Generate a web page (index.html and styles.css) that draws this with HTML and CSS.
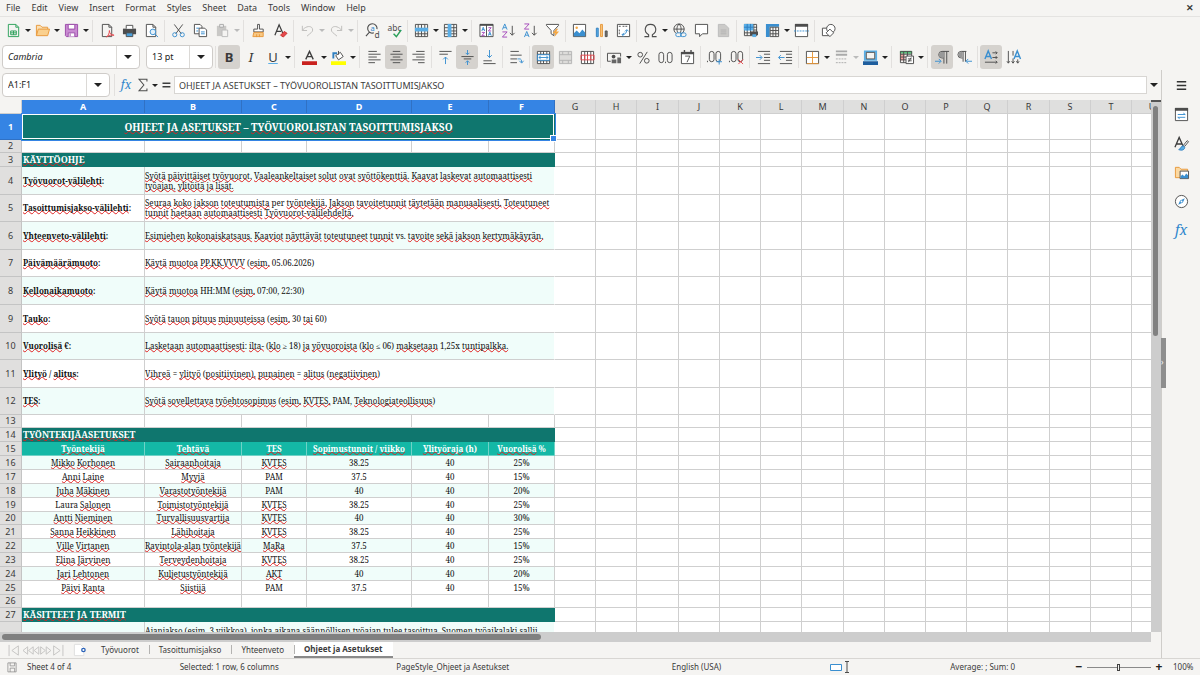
FILE: index.html
```html
<!DOCTYPE html>
<html lang="en">
<head>
<meta charset="utf-8">
<title>Ohjeet ja Asetukset</title>
<link rel="stylesheet" href="styles.css">
</head>
<body>
<nav class="menubar">
  <button>File</button><button>Edit</button><button>View</button><button>Insert</button><button>Format</button><button>Styles</button><button>Sheet</button><button>Data</button><button>Tools</button><button>Window</button><button>Help</button>
  <button class="close" aria-label="Close document">✕</button>
</nav>

<div class="toolbar" role="toolbar" aria-label="Standard">
  <button class="tb" aria-label="New"><svg viewBox="0 0 16 16"><path class="green" d="M2.500 1.500h8l3 3v10h-11z"/><path class="green" d="M10.500 1.500v3h3"/><path class="green" fill="#9fdcb4" d="M5 8.500h6v4H5zM5 10.500h6M8 8.500v4"/></svg></button><button class="dd" aria-label="New options"></button>
  <button class="tb" aria-label="Open"><svg viewBox="0 0 16 16"><path d="M1.500 13.500v-11h4l2 2h6v2" fill="#fbe0b4" stroke="#e8973a"/><path d="M1.500 13.500l2-7h12l-2 7z" fill="#fad08e" stroke="#e8973a"/></svg></button><button class="dd" aria-label="Open options"></button>
  <button class="tb" aria-label="Save"><svg viewBox="0 0 16 16"><path d="M1.500 1.500h13v13h-12l-1-1z" fill="#c98ad2" stroke="#9a4aa8"/><path d="M4.500 1.500h7v5h-7zM4.500 14.500v-4h7v4" fill="#fff" stroke="#9a4aa8"/><path d="M6.500 11v3" stroke="#9a4aa8"/></svg></button><button class="dd" aria-label="Save options"></button>
  <i class="sep"></i>
  <button class="tb" aria-label="Export as PDF"><svg viewBox="0 0 16 16"><path class="g" d="M2.500 1.500h7l3 3v10h-10zM9.500 1.500v3h3"/><path d="M7 15c2-2 3-4 3-7 0 3 2 5 5 5-3-.5-6 0-8 2z" class="red"/></svg></button>
  <button class="tb" aria-label="Print"><svg viewBox="0 0 16 16"><path d="M1 6h14v6H1z" fill="#4d4d4d"/><path d="M4.500 6V2.500h7V6" class="gw"/><path d="M4.500 10.500h7v4h-7z" fill="#4aa0dc" stroke="#4d4d4d"/></svg></button>
  <button class="tb" aria-label="Print preview"><svg viewBox="0 0 16 16"><path class="gw" d="M2.500 1.500h7l3 3v10h-10zM9.500 1.500v3h3"/><circle cx="9.500" cy="9.500" r="3" fill="#e4f1fa" stroke="#3a8fd0"/><path class="b" d="M12 12l3 3"/></svg></button>
  <i class="sep"></i>
  <button class="tb" aria-label="Cut"><svg viewBox="0 0 16 16"><path class="g" d="M3.500 1.500l7.500 10M12.500 1.500L5 11.500"/><circle class="b" cx="4" cy="12.500" r="2.200"/><circle class="b" cx="12" cy="12.500" r="2.200"/></svg></button>
  <button class="tb" aria-label="Copy"><svg viewBox="0 0 16 16"><path class="gw" d="M1.500 1.500h6l2 2v8h-8z"/><path class="gw" d="M6.500 5.500h6l2 2v7h-8z"/><path class="b" d="M3.500 5.500h3M3.500 8.500h2M8.500 9.500h4M8.500 11.500h4"/></svg></button>
  <button class="tb off" aria-label="Paste"><svg viewBox="0 0 16 16"><path d="M2 3h10v11H2z" fill="#c9c8c6"/><path d="M5 1.500h4v3H5z" fill="#eee" stroke="#aaa"/><path d="M7.500 7.500h6v7h-6z" fill="#f5f4f2" stroke="#bbb"/></svg></button><button class="dd off" aria-label="Paste options"></button>
  <i class="sep"></i>
  <button class="tb" aria-label="Clone formatting"><svg viewBox="0 0 16 16"><path class="gw" d="M7 1.500h2v5h4v3H3v-3h4z"/><path d="M3 10h10v4.500H2z" fill="#f8c884" stroke="#e8973a"/><path d="M6 12v3M9 12v3" stroke="#e8973a"/></svg></button>
  <button class="tb" aria-label="Clear formatting"><svg viewBox="0 0 16 16"><path d="M2 13L6.500 2l4 9M3.500 9h5" fill="none" stroke="#3d3d3d" stroke-width="1.300"/><path d="M8 13l4-4 3 2-4 4z" fill="#e5484d" stroke="#c9302c"/></svg></button>
  <i class="sep"></i>
  <button class="tb off" aria-label="Undo"><svg viewBox="0 0 16 16"><path class="lg" d="M2.500 3v5h5M2.500 8c3-5 11-6 11-.5 0 2-2 3-6 6.500"/></svg></button><button class="dd off" aria-label="Undo steps"></button>
  <button class="tb off" aria-label="Redo"><svg viewBox="0 0 16 16"><path class="lg" d="M13.500 3v5h-5M13.500 8c-3-5-11-6-11-.5 0 2 2 3 6 6.500"/></svg></button><button class="dd off" aria-label="Redo steps"></button>
  <i class="sep"></i>
  <button class="tb" aria-label="Find and replace"><svg viewBox="0 0 16 16"><path class="g" d="M9.500 10.500a5 5 0 1 1 3.300-4M4.500 10L1 14" stroke-width="1.200"/><text x="8" y="8.500" class="ib" font-size="8">a</text><text x="13" y="15.500" class="ig" font-size="9">d</text></svg></button>
  <button class="tb" aria-label="Spelling"><svg viewBox="0 0 16 16"><text x="8" y="8" class="ig" font-size="9">abc</text><path d="M7 11.500l3 3 5-7" fill="none" stroke="#2ca05a" stroke-width="1.500"/></svg></button>
  <i class="sep"></i>
  <button class="tb" aria-label="Row"><svg viewBox="0 0 16 16"><path class="g" d="M1.500 1.500h13v13h-13zM1.500 11.500h13M4.500 1.500v13M8 1.500v13M11.500 1.500v13"/><path d="M1 5h14v4H1z" fill="#5aaee6"/></svg></button><button class="dd" aria-label="Row options"></button>
  <button class="tb" aria-label="Column"><svg viewBox="0 0 16 16"><path class="g" d="M1.500 1.500h13v13h-13zM1.500 5h13M1.500 8.500h13M1.500 11.500h13M11.500 1.500v13"/><path d="M5 1h4v14H5z" fill="#5aaee6"/></svg></button><button class="dd" aria-label="Column options"></button>
  <i class="sep"></i>
  <button class="tb" aria-label="Sort"><svg viewBox="0 0 16 16"><path class="gw" d="M1 1.500h14v13H1zM8 1.500v13"/><path d="M1 1h14v2H1z" fill="#4d4d4d"/><path class="b" d="M3 8.500l1.500-4 1.500 4M3.500 7h2M10 13.500l1.500-4 1.500 4M10.500 12h2"/><path d="M3 10h3l-3 3.500h3M10 5h3l-3 3.500h3" fill="none" stroke="#a347ba"/></svg></button>
  <button class="tb" aria-label="Sort ascending"><svg viewBox="0 0 16 16"><path class="b" d="M1.500 7L4 1l2.500 6M2.500 5h3"/><path d="M1.500 9.500h5l-5 5.500h5" fill="none" stroke="#a347ba"/><path class="g" d="M12 3v10M9.500 10.500l2.500 2.500 2.500-2.500"/></svg></button>
  <button class="tb" aria-label="Sort descending"><svg viewBox="0 0 16 16"><path class="b" d="M1.500 15L4 9l2.500 6M2.500 13h3"/><path d="M1.500 1h5l-5 5.500h5" fill="none" stroke="#a347ba"/><path class="g" d="M12 3v10M9.500 10.500l2.500 2.500 2.500-2.500"/></svg></button>
  <button class="tb" aria-label="AutoFilter"><svg viewBox="0 0 16 16"><path class="gw" d="M1.500 1.500h13v1L9.500 8v5.500l-3-2V8l-5-5.500z"/><path d="M12 6l-4 5h3l-1 4 5-6h-3l2-3z" fill="#f5a742"/></svg></button>
  <i class="sep"></i>
  <button class="tb" aria-label="Insert image"><svg viewBox="0 0 16 16"><path class="gw" d="M1.500 1.500h13v13h-13z"/><path d="M2 14v-3l3-3 3 3 3-4 3 3v4z" fill="#3a8fd0"/><circle cx="5" cy="5" r="1.300" fill="#f5a742"/></svg></button>
  <button class="tb" aria-label="Insert chart"><svg viewBox="0 0 16 16"><path d="M2.500 5.500h2v9h-2z" fill="#5aaee6" stroke="#2f7fc0"/><path d="M7 1.500h2v13H7z" fill="#f8c884" stroke="#e8973a"/><path d="M12 8.500h2v6h-2z" fill="#777" stroke="#4d4d4d"/></svg></button>
  <button class="tb" aria-label="Pivot table"><svg viewBox="0 0 16 16"><path class="gw" d="M1.500 1.500h13v13h-13z"/><path class="g" d="M3 3.500h2M7 3.500h6M3.500 7v6" stroke-dasharray="2 1"/><path class="b" d="M6.500 12.500c3 0 5-2 5-5M9.500 9l2-2 2 2M8.500 10.500l-2 2 2 2"/></svg></button>
  <i class="sep"></i>
  <button class="tb" aria-label="Special character"><svg viewBox="0 0 16 16"><path class="g" d="M1.500 14.500H6v-2C0 9 2 1.500 8 1.500s8 7.500 2 11v2h4.500" stroke-width="1.200"/></svg></button><button class="dd" aria-label="Special character options"></button>
  <button class="tb" aria-label="Hyperlink"><svg viewBox="0 0 16 16"><circle class="g" cx="7.500" cy="6.500" r="5.500"/><path class="g" d="M2 6.500h11M7.500 1c-3 3-3 8 0 11M7.500 1c3 3 3 8 0 11"/><rect x="4" y="10.500" width="6" height="4" rx="2" fill="#f5f4f2" stroke="#3a8fd0"/><rect x="9" y="10.500" width="6" height="4" rx="2" fill="none" stroke="#3a8fd0"/></svg></button>
  <button class="tb" aria-label="Comment"><svg viewBox="0 0 16 16"><path class="gw" d="M1.500 1.500h13v10H9l-3 3v-3H1.500z"/></svg></button>
  <button class="tb" aria-label="Headers and footers"><svg viewBox="0 0 16 16"><path d="M2.500 1.500h7l4 4v9h-11z" fill="#cbcac8" stroke="#bbb"/><path d="M5 7.500h6M5 9.500h6M5 11.500h6" stroke="#b2b2b2"/></svg></button>
  <i class="sep"></i>
  <button class="tb" aria-label="Define print area"><svg viewBox="0 0 16 16"><path class="g" d="M1.500 1.500h13v12h-13zM1.500 10.500h13M4.500 1.500v12M8 1.500v12M11.500 1.500v12M11 4.500h4M11 7.500h4"/><path d="M1 1h10v7H1z" fill="#5aaee6"/><path d="M4.500 1v7M8 1v7M1 4.500h10" stroke="#2f7fc0"/><path d="M8 9h8v4H8z" fill="#4d4d4d"/><path d="M10 12h4v3h-4z" fill="#5aaee6"/></svg></button>
  <button class="tb" aria-label="Freeze rows and columns"><svg viewBox="0 0 16 16"><path d="M1 1h14v3H1zM1 1h4v14H1z" fill="#3a8fd0"/><path class="g" d="M5.500 4.500h9v10h-9zM5.500 8h9M5.500 11.500h9M8.500 4.500v10M11.500 4.500v10"/></svg></button><button class="dd" aria-label="Freeze options"></button>
  <button class="tb" aria-label="Split window"><svg viewBox="0 0 16 16"><path class="gw" d="M1.500 1.500h13v13h-13z"/><path d="M1 1h14v3H1z" fill="#4d4d4d"/><path class="b" d="M0 8.500h16" stroke-dasharray="2 1"/></svg></button>
  <i class="sep"></i>
  <button class="tb" aria-label="Show draw functions"><svg viewBox="0 0 16 16"><path class="gw" d="M1.500 5.500h8v8h-8z"/><circle class="gw" cx="10.500" cy="6" r="4.500"/><path class="gw" d="M9.500 6.500l4 4-4 4-4-4z"/></svg></button>
</div>

<div class="toolbar format" role="toolbar" aria-label="Formatting">
  <span class="combo font"><input aria-label="Font name" value="Cambria"><button aria-label="Font list"></button></span>
  <span class="combo size"><input aria-label="Font size" value="13 pt"><button aria-label="Size list"></button></span>
  <i class="sep"></i>
  <button class="tb on letter"><b>B</b></button>
  <button class="tb letter"><em>I</em></button>
  <button class="tb letter"><u>U</u></button><button class="dd" aria-label="Underline styles"></button>
  <i class="sep"></i>
  <button class="tb" aria-label="Font color"><svg viewBox="0 0 16 16"><path d="M4 10L8 1.500l4 8.500M5.500 7h5" fill="none" stroke="#3d3d3d" stroke-width="1.400"/><path d="M0 12h16v4H0z" fill="#c9211e"/></svg></button><button class="dd" aria-label="Font color palette"></button>
  <button class="tb" aria-label="Highlighting"><svg viewBox="0 0 16 16"><path d="M2.500 9V3.500h4" fill="none" stroke="#2f7fc0" stroke-width="2"/><path class="gw" d="M5 6l5-3.500 3 4.500-5 3.500zM8 1v4"/><path d="M0 12h16v4H0z" fill="#ff0"/></svg></button><button class="dd" aria-label="Highlighting palette"></button>
  <i class="sep"></i>
  <button class="tb" aria-label="Align left"><svg viewBox="0 0 16 16"><path class="g" d="M1.500 1.500h9M1.500 4.500h13M1.500 7.500h9M1.500 10.500h13M1.500 13.500h7"/></svg></button>
  <button class="tb on" aria-label="Align center"><svg viewBox="0 0 16 16"><path class="g" d="M4 1.500h8M1.500 4.500h13M4 7.500h8M1.500 10.500h13M4 13.500h8"/></svg></button>
  <button class="tb" aria-label="Align right"><svg viewBox="0 0 16 16"><path class="g" d="M5.500 1.500h9M1.500 4.500h13M5.500 7.500h9M1.500 10.500h13M7.500 13.500h7"/></svg></button>
  <i class="sep"></i>
  <button class="tb" aria-label="Align top"><svg viewBox="0 0 16 16"><path class="g" d="M1.500 1.500h13M1.500 4.500h9"/><path class="b" d="M8 15V7.500M5.500 10L8 7.500l2.500 2.500"/></svg></button>
  <button class="tb on" aria-label="Center vertically"><svg viewBox="0 0 16 16"><path class="g" d="M1.500 7h13M4 9.500h8"/><path class="b" d="M8 0v5M6 3l2 2 2-2M8 16v-4.500M6 13.500l2-2 2 2"/></svg></button>
  <button class="tb" aria-label="Align bottom"><svg viewBox="0 0 16 16"><path class="g" d="M1.500 11.500h9M1.500 14.500h13"/><path class="b" d="M8 0v8M5.500 5.500L8 8l2.500-2.500"/></svg></button>
  <i class="sep"></i>
  <button class="tb" aria-label="Wrap text"><svg viewBox="0 0 16 16"><path class="g" d="M1.500 1.500h9M1.500 5.500h12M1.500 9.500h7M1.500 13.500h7"/><path class="b" d="M9 9.500h3q1.500 0 1.500 4M11 11.500l2.500 2.500 2-2.500"/></svg></button>
  <i class="sep"></i>
  <button class="tb on" aria-label="Merge and center"><svg viewBox="0 0 16 16"><path class="gw" d="M1.500 1.500h13v13h-13zM1.500 4.500h13M1.500 11.500h13M5 1.500v3M8 1.500v3M11.500 1.500v3M5 11.500v3M8 11.500v3M11.500 11.500v3"/><path class="b" d="M1.500 5v6h13V5zM3 8h10M5 6.500L3 8l2 1.500M11 6.500L13 8l-2 1.500"/></svg></button>
  <button class="tb off" aria-label="Merge cells"><svg viewBox="0 0 16 16"><path d="M1.500 1.500h13v13h-13zM1.500 5h13M1.500 11h13M5 1.500V5M11 1.500V5M5 11v3.500M11 11v3.500" fill="#dddcda" stroke="#b4b4b4"/></svg></button>
  <button class="tb" aria-label="Unmerge cells"><svg viewBox="0 0 16 16"><path class="gw" d="M1.500 1.500h13v13h-13zM5 1.500v13M8 1.500v13M11.500 1.500v13"/><path class="red" d="M1 5.500h14v5H1zM5 5.500v5M8 5.500v5M11.500 5.500v5"/></svg></button>
  <i class="sep"></i>
  <button class="tb" aria-label="Currency"><svg viewBox="0 0 16 16"><path class="g" d="M4 12H.5V3.500h14V7"/><circle cx="7" cy="7" r="2" fill="#4d4d4d"/><path d="M5 10h5v4H5zM11 8h4v6h-4z" fill="#666"/></svg></button><button class="dd" aria-label="Currency options"></button>
  <button class="tb" aria-label="Percent"><svg viewBox="0 0 16 16"><circle class="g" cx="4.500" cy="5" r="2.500"/><circle class="g" cx="11.500" cy="11.500" r="2.500"/><path class="g" d="M12 2L4 14.500"/></svg></button>
  <button class="tb" aria-label="Number"><svg viewBox="0 0 16 16"><rect class="g" x="1" y="2.500" width="5" height="11" rx="2.500"/><rect class="g" x="10" y="2.500" width="5" height="11" rx="2.500"/><path class="g" d="M8 12.500v1.500"/></svg></button>
  <button class="tb" aria-label="Date"><svg viewBox="0 0 16 16"><path class="gw" d="M1.500 2.500h13v12h-13z"/><path d="M1 2h14v2.500H1zM4 0h1.500v3H4zM11 0h1.500v3H11z" fill="#4d4d4d"/><path class="g" d="M5.500 6.500h5l-3 6.500"/></svg></button>
  <i class="sep"></i>
  <button class="tb" aria-label="Add decimal place"><svg viewBox="0 0 16 16"><rect class="g" x="2.500" y="1.500" width="5" height="11" rx="2.500"/><rect class="g" x="9.500" y="1.500" width="5" height="11" rx="2.500"/><path class="g" d="M.5 11.500V13"/><path class="b" d="M10 12.500h6M13 9.500v6"/></svg></button>
  <button class="tb" aria-label="Delete decimal place"><svg viewBox="0 0 16 16"><rect class="g" x="2.500" y="1.500" width="5" height="11" rx="2.500"/><rect class="g" x="9.500" y="1.500" width="5" height="11" rx="2.500"/><path class="g" d="M.5 11.500V13"/><path class="red" d="M10 10l5 5M15 10l-5 5"/></svg></button>
  <i class="sep"></i>
  <button class="tb" aria-label="Increase indent"><svg viewBox="0 0 16 16"><path class="g" d="M2 1.500h13M8.500 4.500H15M8.500 8H15M8.500 11H15M2 14.500h13"/><path class="b" d="M0 8h6M4 5.500L6.500 8 4 10.500"/></svg></button>
  <button class="tb" aria-label="Decrease indent"><svg viewBox="0 0 16 16"><path class="g" d="M2 1.500h13M8.500 4.500H15M8.500 8H15M8.500 11H15M2 14.500h13"/><path class="b" d="M1 8h6M3 5.500L.5 8 3 10.500"/></svg></button>
  <i class="sep"></i>
  <button class="tb" aria-label="Borders"><svg viewBox="0 0 16 16"><path class="gw" d="M1.500 1.500h13v13h-13z"/><path d="M2 14.500h12.500M2 8h12M8 2v12" fill="none" stroke="#e8973a"/></svg></button><button class="dd" aria-label="Border choices"></button>
  <button class="tb off" aria-label="Border style"><svg viewBox="0 0 16 16"><path d="M2 1.500h12M2 5h12" stroke="#aaa" stroke-width="2"/><path d="M2 9.500h12M2 13.500h12" stroke="#aaa" stroke-dasharray="2 1"/></svg></button><button class="dd off" aria-label="Border style choices"></button>
  <button class="tb" aria-label="Border color"><svg viewBox="0 0 16 16"><path d="M2 1.500h12v9H2z" fill="#f5f4f2" stroke="#5aaee6" stroke-width="2"/><path class="g" d="M3.500 2.500h9v7h-9z"/><path d="M0 12h16v4H0z" fill="#1e5e9e"/></svg></button><button class="dd" aria-label="Border color palette"></button>
  <i class="sep"></i>
  <button class="tb" aria-label="Conditional formatting"><svg viewBox="0 0 16 16"><path d="M1 1h13v3H1z" fill="#59c27b"/><path d="M1 4h5v7H1z" fill="#f1a09c"/><path class="g" d="M1.500 1.500h12v12h-12zM1.500 4.500h12M1.500 7.500h12M1.500 10.500h12M5 1.500v12M9 1.500v12"/><path class="gw" d="M7.500 6.500h8v8h-8z"/><path class="g" d="M9.500 9.500h4M9.500 11.500h4M13 8l-3 5"/></svg></button><button class="dd" aria-label="Conditional formatting options"></button>
  <i class="sep"></i>
  <button class="tb on" aria-label="Left-to-right"><svg viewBox="0 0 16 16"><path class="g" d="M15 1.500H7.500a3.500 3.500 0 0 0 0 7H9M9.500 1.500v13M12.500 1.500v13"/><path d="M9.500 2H7a3 3 0 0 0 0 6h2.500z" fill="#999"/><path class="b" d="M0 12h6M4 9.500L6.500 12 4 14.500"/></svg></button>
  <button class="tb" aria-label="Right-to-left"><svg viewBox="0 0 16 16"><path class="g" d="M10 1.500H4.500a3.500 3.500 0 0 0 0 7H6M6.500 1.500v11M9 1.500v11"/><path d="M6 2H4.500a3 3 0 0 0 0 6H6z" fill="#999"/><path class="b" d="M10 12h6M12 9.500L9.500 12l2.500 2.500"/></svg></button>
  <i class="sep"></i>
  <button class="tb on" aria-label="Text direction horizontal"><svg viewBox="0 0 16 16"><path d="M1 9.500L4.500 1 8 9.500M2 7h5" fill="none" stroke="#3a8fd0" stroke-width="1.500"/><path class="g" d="M9 3h5M12.500 1.500L14 3l-1.500 1.500M9 8h5M12.500 6.500L14 8l-1.500 1.500M1 13h13M12.500 11.500L14 13l-1.500 1.500"/></svg></button>
  <button class="tb" aria-label="Text direction vertical"><svg viewBox="0 0 16 16"><path class="g" d="M2.500 1v13M1 12l1.500 2L4 12M7.500 1v5M7.500 9v5M6 12l1.500 2L9 12M12.500 10v4M11 12l1.500 2 1.500-2"/><path d="M8.500 9.500L12 1l3.500 8.500M9.500 7h5" fill="none" stroke="#3a8fd0" stroke-width="1.500"/></svg></button>
</div>

<main class="main">
  <section class="doc">
    <div class="formulabar">
      <span class="combo name"><input aria-label="Name box" value="A1:F1"><button aria-label="Named ranges"></button></span>
      <i class="sep"></i>
      <button class="fx" aria-label="Function wizard"><em>fx</em></button>
      <button class="tb" aria-label="Select function"><svg viewBox="0 0 16 16"><path class="g" d="M12.500 4V1.500h-9L9 8l-5.500 6.500h9V12" stroke-width="1.200"/></svg></button><button class="dd" aria-label="Functions"></button>
      <button class="tb" aria-label="Formula"><svg viewBox="0 0 16 16"><path d="M4 6h9M4 10h9" stroke="#3d3d3d" stroke-width="1.500"/></svg></button>
      <input class="formula" aria-label="Input line" value="OHJEET JA ASETUKSET – TYÖVUOROLISTAN TASOITTUMISJAKSO">
      <button class="dd big" aria-label="Expand formula bar"></button>
    </div>
    <div class="grid">
      <div class="sheet"><table><colgroup></colgroup><thead></thead><tbody></tbody></table></div>
      <div class="vbar"><i></i></div>
      <div class="hbar"><i></i></div>
    </div>
    <div class="tabs">
      <svg class="nav" viewBox="0 0 60 14"><path d="M1 1v12M11 2L4 7l7 5zM21 3l-5 4 5 4zM27 3l-5 4 5 4zM33 3l-5 4 5 4zM35 3l5 4-5 4zM41 3l5 4-5 4zM49 2l7 5-7 5zM59 1v12"/></svg>
      <button class="add" aria-label="Add sheet"><svg viewBox="0 0 14 14"><path d="M.500 .500h7l4 4v9H.500z" fill="#fff" stroke="#ddd"/><circle cx="11" cy="7" r="2" fill="#fff" stroke="#2a62b8" stroke-width="1.500"/></svg></button>
      <button>Työvuorot</button><button>Tasoittumisjakso</button><button>Yhteenveto</button><button class="active">Ohjeet ja Asetukset</button>
    </div>
  </section>
  <aside class="side">
    <button aria-label="Sidebar settings"><svg viewBox="0 0 16 16"><path d="M3 4h10M3 8h10M3 12h10" stroke="#333" stroke-width="1.500"/></svg></button>
    <button aria-label="Properties"><svg viewBox="0 0 16 16"><path class="gw" d="M1.500 1.500h13v13h-13z"/><path d="M1 1h14v3H1z" fill="#4d4d4d"/><path class="b" d="M4 8h8M10 6.500L12 8M4 11h8M4 11l2 1.500"/></svg></button>
    <button aria-label="Styles"><svg viewBox="0 0 16 16"><path d="M1 12L5.500 1.500l4 9M2.500 8.500h6" fill="none" stroke="#3d3d3d" stroke-width="1.400"/><path class="gw" d="M10 10l4-5 1.500 1-4 5z"/><path d="M5 14.500c2 0 2-4 5-4l1.500 2c-1 3-4 3-6.500 2z" fill="#5aaee6" stroke="#2f7fc0"/></svg></button>
    <button aria-label="Gallery"><svg viewBox="0 0 16 16"><path d="M1.500 13.500v-11h4l2 2h7v9z" fill="#fbd9a3" stroke="#e8973a"/><path class="gw" d="M6.500 6.500h9v8h-9z"/><path d="M7 14v-2l2-2 2 2 2-3 2 2v3z" fill="#3a8fd0"/></svg></button>
    <button aria-label="Navigator"><svg viewBox="0 0 16 16"><circle class="gw" cx="8" cy="8" r="6.500"/><path d="M11.500 4.500L9.500 9 4.500 11.500 6.500 7z" fill="#3a8fd0"/><circle cx="8" cy="8" r="1" fill="#fff"/></svg></button>
    <button class="fx" aria-label="Functions"><em>fx</em></button>
    <i class="handle">›</i>
  </aside>
</main>

<footer class="status">
  <svg class="disk" viewBox="0 0 16 16"><path d="M2.500 2.500h11v12h-11zM5.500 2.500v4h6v-4M5.500 14.500v-5h6v5"/></svg>
  <span class="s1">Sheet 4 of 4</span>
  <span class="s2">Selected: 1 row, 6 columns</span>
  <span class="s3">PageStyle_Ohjeet ja Asetukset</span>
  <span class="s4">English (USA)</span>
  <span class="s5"><svg viewBox="0 0 22 12"><path d="M1.500 3.500h11v6h-11z" fill="#fff" stroke="#3a8fd0"/><path class="g" d="M16 .5h4M16 11.500h4M18 .5v11"/></svg></span>
  <span class="s6">Average: ; Sum: 0</span>
  <span class="s7"><button aria-label="Zoom out">−</button><input type="range" aria-label="Zoom" min="0" max="100" value="49"><button aria-label="Zoom in">+</button></span>
  <span class="s8">100%</span>
</footer>
<script src="sheet.js"></script>
</body>
</html>
```
FILE: styles.css
```css
* { box-sizing: border-box; }
body { margin: 0; height: 100vh; display: flex; flex-direction: column; overflow: hidden; background: #f5f4f2; color: #3a3a3a; font: 9px/12px "Noto Sans", sans-serif; }
button, input { font: inherit; color: inherit; border: 0; background: none; padding: 0; margin: 0; min-width: 0; }
svg { display: block; overflow: visible; }
.g { fill: none; stroke: #4d4d4d; }
.gw { fill: #fff; stroke: #4d4d4d; }
.b { fill: none; stroke: #3a8fd0; }
.red { fill: none; stroke: #e5484d; }
.lg { fill: none; stroke: #bdbcba; }
.green { fill: none; stroke: #2ca05a; }
.ib, .ig { text-anchor: middle; fill: #2f86cc; }
.ig { fill: #4d4d4d; }

.menubar { display: flex; height: 17px; padding: 0 6px; gap: 11px; align-items: center; border-bottom: 1px solid #e4e3e1; }
.close { margin-left: auto; font-weight: bold; }

.toolbar { display: flex; height: 27px; align-items: center; padding-left: 2px; }
.toolbar.format { height: 26px; }
.tb { width: 22px; height: 24px; flex: none; display: flex; align-items: center; justify-content: center; border-radius: 3px; }
.tb svg { width: 15px; height: 15px; }
.tb.on { background: #d5d2ce; }
.dd { width: 7px; height: 22px; flex: none; display: flex; align-items: center; justify-content: center; }
.dd::before, .combo button::before { content: ""; border: 3px solid transparent; border-top: 3px solid #222; border-bottom: 0; }
.dd.off::before { border-top-color: #bbb; }
.dd.big::before { border-width: 4px 4px 0; }
.sep { width: 1px; height: 22px; flex: none; margin: 0 2px; background: #e2e0de; }
.dd + .sep { margin: 0 3px; }
.letter { font-size: 13px; }
.letter em { font-family: "Noto Serif", serif; }
.letter u { text-decoration-color: #5aaee6; }

.combo { display: flex; height: 24px; background: #fff; border: 1px solid #cfccc9; border-radius: 4px; }
.combo input { flex: 1; padding-left: 5px; color: #222; }
.combo button { width: 23px; border-left: 1px solid #dbd9d6; display: flex; align-items: center; justify-content: center; }
.combo button::before { border-width: 4px 4px 0; }
.combo.font { width: 138px; margin-right: 6px; }
.combo.font input { font-style: italic; }
.combo.size { width: 67px; }

.main { flex: 1; min-height: 0; display: flex; }
.doc { flex: 1; min-width: 0; display: flex; flex-direction: column; }
.formulabar { display: flex; height: 30px; align-items: center; padding-left: 2px; }
.combo.name { width: 108px; margin-right: 2px; }
.formulabar .tb { width: 16px; }
.formulabar .tb svg { width: 14px; height: 14px; }
.fx { width: 18px; color: #2f86cc; font: 12px/16px "Noto Serif", serif; }
.formula { flex: 1; height: 18px; padding-left: 4px; background: #fff; border: 1px solid #d8d6d3; }
.formulabar .big { width: 14px; }

.grid { flex: 1; min-height: 0; display: grid; grid-template: minmax(0, 1fr) 10px / minmax(0, 1fr) 10px; }
.sheet { overflow: hidden; background: #fff; }
table { table-layout: fixed; width: 1px; border-collapse: separate; border-spacing: 0; }
th, td { padding: 0; border: solid #cfcfcf; border-width: 0 1px 1px 0; overflow: hidden; white-space: nowrap; line-height: 10px; text-align: center; }
thead th { height: 14px; background: #dfdfde; font-weight: normal; }
tbody th { background: #e0dfde; border-color: #c4c4c4; font-weight: normal; }
thead .sel, tbody th.sel { background: #3584e4; border-color: #3071c4; color: #fff; font-weight: bold; }
thead th:first-child { background: #f5f4f2; }
td { font-family: "Noto Serif", serif; font-size: 8px; color: #111; }
td.band, td.title { background: #0f766e; border-color: #0f766e; color: #fff; font-weight: bold; font-size: 9px; text-align: left; padding-left: 1px; }
td.title { font-size: 10px; text-align: center; position: relative; overflow: visible; outline: 1px solid #3584e4; box-shadow: inset 0 0 0 1px #fff; }
td.title::after { content: ""; position: absolute; right: -3px; bottom: -3px; width: 5px; height: 5px; background: #3584e4; border: 1px solid #fff; }
td.label { text-align: left; font-weight: bold; padding-left: 1px; }
td.note { text-align: left; white-space: normal; border-right-color: transparent; background-clip: padding-box; }
td.top { vertical-align: top; padding-top: 4px; }
td.head { background: #14b8a6; border-color: #6fd2c6; color: #fff; font-weight: bold; }
tr.alt td.fill { background-color: #f0fdfa; }
td s { text-decoration: underline wavy #e02020 1px; text-decoration-skip-ink: none; text-underline-offset: -1px; }

.vbar { background: #cdcdcd; padding: 4px 2px; border-top: 2px solid #555; }
.vbar i { display: block; height: 44%; width: 5px; border-radius: 3px; background: #808080; }
.hbar { background: #cdcdcd; padding: 2px; }
.hbar i { display: block; height: 6px; width: 47%; border-radius: 3px; background: #808080; }
.tabs { display: flex; height: 16px; align-items: center; font-size: 8px; }
.tabs button { padding: 0 10px; height: 16px; position: relative; }
.tabs button:not(.add) + button::before { content: ""; position: absolute; left: 0; top: 3px; width: 1px; height: 9px; background: #b4b3b1; }
.tabs .add { width: 20px; padding: 0; }
.add svg { width: 12px; height: 12px; }
.tabs .add + button { padding-left: 7px; }
.tabs .active { background: #fff; font-weight: bold; border-bottom: 2px solid #8a8a8a; }
.nav { width: 60px; height: 13px; margin: 0 8px 0 6px; fill: none; stroke: #c4c3c1; }

.side { width: 39px; display: flex; flex-direction: column; align-items: center; padding-top: 5px; gap: 9px; border-left: 1px solid #cfcdca; position: relative; }
.side button { height: 20px; display: flex; align-items: center; justify-content: center; }
.side svg { width: 15px; height: 15px; }
.side .fx { font-size: 14px; }
.handle { position: absolute; left: -1px; top: 45.5%; width: 5px; height: 50px; background: #8e8e8e; color: #fff; font: 8px/48px "Noto Sans", sans-serif; }

.status { height: 17px; display: flex; align-items: center; border-top: 1px solid #d8d6d3; font-size: 8px; }
.disk { width: 12px; height: 12px; margin: 0 9px 0 6px; fill: none; stroke: #8a8a8a; }
.status span { display: flex; align-items: center; white-space: nowrap; }
.s1 { flex: 153; }
.s2 { flex: 217; }
.s3 { flex: 276; }
.s4 { flex: 158; }
.s5 { flex: 121; }
.s5 svg { width: 22px; height: 12px; }
.s6 { flex: 124; }
.s7 { width: 90px; gap: 3px; }
.s7 button { width: 10px; font-size: 12px; font-weight: bold; color: #222; }
.s7 input { flex: 1; width: 60px; height: 12px; appearance: none; }
.s7 input::-webkit-slider-runnable-track { height: 1px; background: #8a8a8a; }
.s7 input::-webkit-slider-thumb { appearance: none; width: 3px; height: 7px; margin-top: -3px; background: #f5f4f2; border: 1px solid #444; }
.s8 { width: 36px; padding-left: 9px; }
```
FILE: sheet.js
```js
const widths = [22, 123, 97, 65, 105, 77, 66, 41, 41, 42, 41, 41, 41, 42, 41, 41, 41, 41, 42, 41, 41, 41];
const letters = 'ABCDEFGHIJKLMNOPQRSTU';
const correct = /^(per|vs\.|PAM,?|Laura|HH:MM)$/;

const notes = [
  ['Työvuorot-välilehti:', 'Syötä päivittäiset työvuorot. Vaaleankeltaiset solut ovat syöttökenttiä. Kaavat laskevat automaattisesti työajan, ylitöitä ja lisät.'],
  ['Tasoittumisjakso-välilehti:', 'Seuraa koko jakson toteutumista per työntekijä. Jakson tavoitetunnit täytetään manuaalisesti. Toteutuneet tunnit haetaan automaattisesti Työvuorot-välilehdeltä.'],
  ['Yhteenveto-välilehti:', 'Esimiehen kokonaiskatsaus. Kaaviot näyttävät toteutuneet tunnit vs. tavoite sekä jakson kertymäkäyrän.'],
  ['Päivämäärämuoto:', 'Käytä muotoa PP.KK.VVVV (esim. 05.06.2026)'],
  ['Kellonaikamuoto:', 'Käytä muotoa HH:MM (esim. 07:00, 22:30)'],
  ['Tauko:', 'Syötä tauon pituus minuuteissa (esim. 30 tai 60)'],
  ['Vuorolisä €:', 'Lasketaan automaattisesti: ilta- (klo ≥ 18) ja yövuoroista (klo ≤ 06) maksetaan 1,25x tuntipalkka.'],
  ['Ylityö / alitus:', 'Vihreä = ylityö (positiivinen), punainen = alitus (negatiivinen)'],
  ['TES:', 'Syötä sovellettava työehtosopimus (esim. KVTES, PAM, Teknologiateollisuus)'],
];
const people = [
  ['Mikko Korhonen', 'Sairaanhoitaja', 'KVTES', '38.25', '40', '25%'],
  ['Anni Laine', 'Myyjä', 'PAM', '37.5', '40', '15%'],
  ['Juha Mäkinen', 'Varastotyöntekijä', 'PAM', '40', '40', '20%'],
  ['Laura Salonen', 'Toimistotyöntekijä', 'KVTES', '38.25', '40', '25%'],
  ['Antti Nieminen', 'Turvallisuusvartija', 'KVTES', '40', '40', '30%'],
  ['Sanna Heikkinen', 'Lähihoitaja', 'KVTES', '38.25', '40', '25%'],
  ['Ville Virtanen', 'Ravintola-alan työntekijä', 'MaRa', '37.5', '40', '15%'],
  ['Elina Järvinen', 'Terveydenhoitaja', 'KVTES', '38.25', '40', '25%'],
  ['Jari Lehtonen', 'Kuljetustyöntekijä', 'AKT', '40', '40', '20%'],
  ['Päivi Ranta', 'Siistijä', 'PAM', '37.5', '40', '15%'],
];

// Wraps every word the spell checker does not know.
function spell(text) {
  return text.split(' ').map(word => {
    if (correct.test(word) || !/[A-Za-zÄÖäö]{2}/.test(word)) return word;
    return word.replace(/^(\(?)(.*?)([):]*)$/, '$1<s>$2</s>$3');
  }).join(' ');
}
const cell = (text, cls, span = 1) => `<td class="${cls}" colspan="${span}">${spell(text)}</td>`;

let rowNumber = 0;
let html = '';
function row(height, cells, used = 6, alt = false, label = true) {
  rowNumber++;
  const rest = '<td></td>'.repeat(letters.length - used);
  html += `<tr class="${alt ? 'alt' : ''}" style="height:${height}px"><th class="${rowNumber === 1 ? 'sel' : ''}">${label ? rowNumber : ''}</th>${cells}${rest}</tr>`;
}
row(26, cell('OHJEET JA ASETUKSET – TYÖVUOROLISTAN TASOITTUMISJAKSO', 'title', 6));
row(13, '', 0);
row(14, cell('KÄYTTÖOHJE', 'band', 6));
notes.forEach(([name, text], i) => row([28, 27, 28, 27, 28, 28, 27, 28, 27][i], cell(name, 'label fill') + cell(text, 'note fill', 5), 6, i % 2 === 0));
row(13, '', 0);
row(14, cell('TYÖNTEKIJÄASETUKSET', 'band', 6));
row(14, ['Työntekijä', 'Tehtävä', 'TES', 'Sopimustunnit / viikko', 'Ylityöraja (h)', 'Vuorolisä %'].map(t => cell(t, 'head')).join(''));
people.forEach((p, i) => row(i === 4 ? 13 : 14, p.map(t => cell(t, 'fill')).join(''), 6, i % 2 === 0));
row(13, '', 0);
row(14, cell('KÄSITTEET JA TERMIT', 'band', 6));
row(42, cell('', 'label fill') + cell('Ajanjakso (esim. 3 viikkoa), jonka aikana säännöllisen työajan tulee tasoittua. Suomen työaikalaki sallii', 'note fill top', 5), 6, true, false);

document.querySelector('colgroup').innerHTML = widths.map(w => `<col style="width:${w}px">`).join('');
document.querySelector('thead').innerHTML = '<tr><th></th>' + [...letters].map((l, i) => `<th class="${i < 6 ? 'sel' : ''}">${l}</th>`).join('') + '</tr>';
document.querySelector('tbody').innerHTML = html;
```
